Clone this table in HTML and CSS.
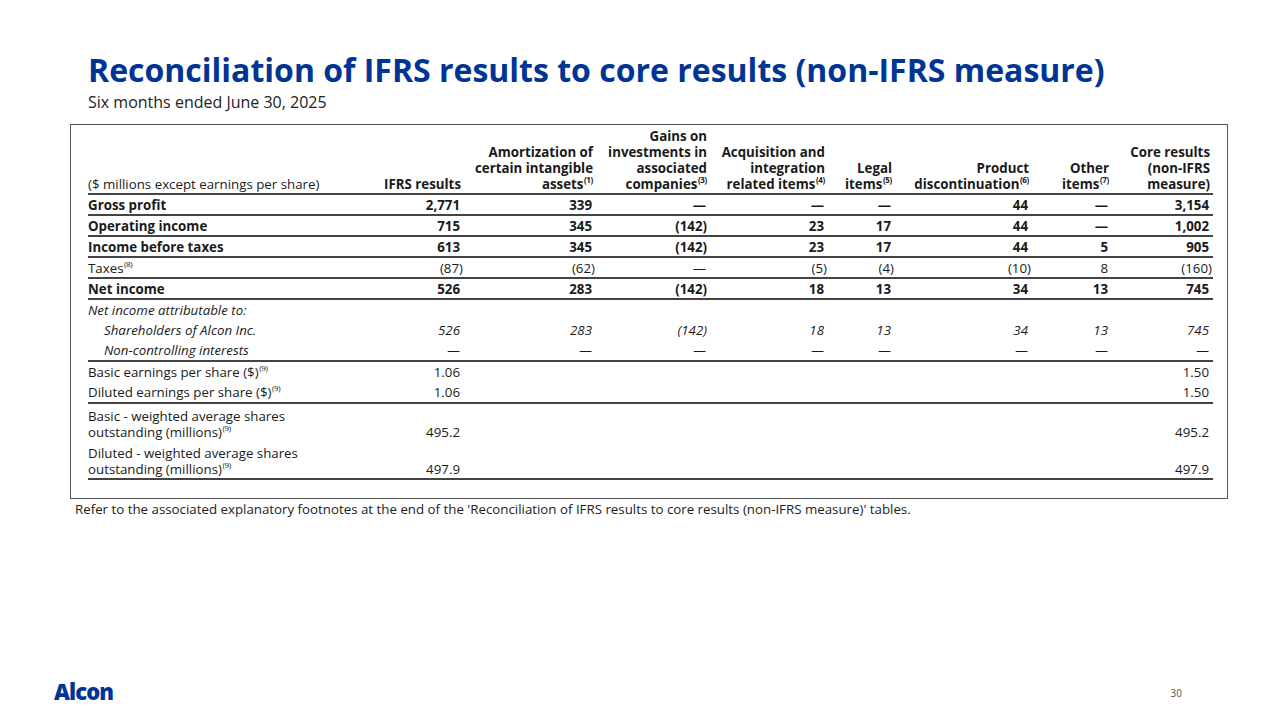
FILE: index.html
```html
<!DOCTYPE html>
<html>
<head>
<meta charset="utf-8">
<link rel="stylesheet" href="styles.css">
</head>
<body>
<div class="slide">
  <h1 class="title">Reconciliation of IFRS results to core results (non-IFRS measure)</h1>
  <div class="subtitle">Six months ended June 30, 2025</div>
  <div class="box">
    <table class="recon">
      <colgroup>
        <col class="c0"><col class="c1"><col class="c2"><col class="c3"><col class="c4"><col class="c5"><col class="c6"><col class="c7"><col class="c8">
      </colgroup>
      <thead>
        <tr>
          <th class="lbl">($ millions except earnings per share)</th>
          <th>IFRS results</th>
          <th>Amortization of certain intangible assets<sup>(1)</sup></th>
          <th>Gains on investments in associated companies<sup>(3)</sup></th>
          <th>Acquisition and integration related items<sup>(4)</sup></th>
          <th>Legal items<sup>(5)</sup></th>
          <th>Product discontinuation<sup>(6)</sup></th>
          <th>Other items<sup>(7)</sup></th>
          <th>Core results (non-IFRS measure)</th>
        </tr>
      </thead>
      <tbody>
        <tr class="b line">
          <td class="lbl">Gross profit</td><td>2,771</td><td>339</td><td>—</td><td>—</td><td>—</td><td>44</td><td>—</td><td>3,154</td>
        </tr>
        <tr class="b line">
          <td class="lbl">Operating income</td><td>715</td><td>345</td><td><span class="negb">(142)</span></td><td>23</td><td>17</td><td>44</td><td>—</td><td>1,002</td>
        </tr>
        <tr class="b line">
          <td class="lbl">Income before taxes</td><td>613</td><td>345</td><td><span class="negb">(142)</span></td><td>23</td><td>17</td><td>44</td><td>5</td><td>905</td>
        </tr>
        <tr class="line">
          <td class="lbl">Taxes<sup>(8)</sup></td><td><span class="neg">(87)</span></td><td><span class="neg">(62)</span></td><td>—</td><td><span class="neg">(5)</span></td><td><span class="neg">(4)</span></td><td><span class="neg">(10)</span></td><td>8</td><td><span class="neg">(160)</span></td>
        </tr>
        <tr class="b line">
          <td class="lbl">Net income</td><td>526</td><td>283</td><td><span class="negb">(142)</span></td><td>18</td><td>13</td><td>34</td><td>13</td><td>745</td>
        </tr>
        <tr class="i">
          <td class="lbl" colspan="9">Net income attributable to:</td>
        </tr>
        <tr class="i">
          <td class="lbl ind">Shareholders of Alcon Inc.</td><td>526</td><td>283</td><td><span class="negb">(142)</span></td><td>18</td><td>13</td><td>34</td><td>13</td><td>745</td>
        </tr>
        <tr class="i line">
          <td class="lbl ind">Non-controlling interests</td><td>—</td><td>—</td><td>—</td><td>—</td><td>—</td><td>—</td><td>—</td><td>—</td>
        </tr>
        <tr class="eps">
          <td class="lbl">Basic earnings per share ($)<sup>(9)</sup></td><td>1.06</td><td></td><td></td><td></td><td></td><td></td><td></td><td>1.50</td>
        </tr>
        <tr class="eps line">
          <td class="lbl">Diluted earnings per share ($)<sup>(9)</sup></td><td>1.06</td><td></td><td></td><td></td><td></td><td></td><td></td><td>1.50</td>
        </tr>
        <tr class="tall">
          <td class="lbl">Basic - weighted average shares<br>outstanding (millions)<sup>(9)</sup></td><td>495.2</td><td></td><td></td><td></td><td></td><td></td><td></td><td>495.2</td>
        </tr>
        <tr class="tall line">
          <td class="lbl">Diluted - weighted average shares<br>outstanding (millions)<sup>(9)</sup></td><td>497.9</td><td></td><td></td><td></td><td></td><td></td><td></td><td>497.9</td>
        </tr>
      </tbody>
    </table>
  </div>
  <div class="note">Refer to the associated explanatory footnotes at the end of the 'Reconciliation of IFRS results to core results (non-IFRS measure)' tables.</div>
  <div class="footer">
    <div class="logo">Alcon</div>
    <div class="page">30</div>
  </div>
</div>
</body>
</html>
```
FILE: styles.css
```css
html, body {
  margin: 0;
  padding: 0;
  background: #ffffff;
}
.slide {
  width: 1280px;
  height: 720px;
  box-sizing: border-box;
  position: relative;
  font-family: "Open Sans", "DejaVu Sans", sans-serif;
  color: #1a1a1a;
  padding: 50px 52px 0 70px;
  display: flex;
  flex-direction: column;
}
.title {
  margin: 0 0 0 18px;
  font-size: 32px;
  line-height: 40px;
  font-weight: 700;
  color: #003595;
}
.subtitle {
  margin: 0 0 0 18px;
  font-size: 16px;
  line-height: 24px;
  color: #222;
}
.box {
  margin-top: 10px;
  border: 1.5px solid #555;
  padding: 3px 14px 18px 17px;
  width: 1158px;
  box-sizing: border-box;
}
.recon {
  border-collapse: collapse;
  table-layout: fixed;
  width: 1125px;
  font-size: 13.3px;
  line-height: 16px;
}
.c0 { width: 294px; }
.c1 { width: 82px; }
.c2 { width: 132px; }
.c3 { width: 114px; }
.c4 { width: 118px; }
.c5 { width: 67px; }
.c6 { width: 137px; }
.c7 { width: 80px; }
.c8 { width: 101px; }
.recon th {
  font-weight: 700;
  text-align: right;
  vertical-align: bottom;
  padding: 0 3px 1px 0;
  border-bottom: 2px solid #444;
}
.recon th.lbl {
  font-weight: 400;
  text-align: left;
}
.recon td {
  text-align: right;
  padding: 0 4px 0 0;
  height: 19px;
  vertical-align: middle;
}
.recon td.lbl {
  text-align: left;
}
.recon td.ind {
  padding-left: 16px;
}
.recon tr.line td {
  border-bottom: 2px solid #444;
}
.recon tr.b td { font-weight: 700; }
.recon tr.i td { font-style: italic; height: 20px; }
.recon tr.eps td { height: 20px; }
.recon tr.tall td {
  height: 36px;
  vertical-align: bottom;
  padding-bottom: 1px;
}
.recon sup {
  font-size: 8px;
  line-height: 0;
  vertical-align: 6px;
  letter-spacing: -0.3px;
  margin-left: 0.5px;
}
.neg {
  margin-right: -3px;
}
.negb {
  margin-right: -1px;
}
.note {
  margin: 1px 0 0 5px;
  font-size: 13.3px;
  line-height: 18px;
  color: #222;
}
.footer {
  margin-top: auto;
  height: 42px;
  display: flex;
  align-items: flex-start;
  justify-content: space-between;
  margin-left: -16px;
  width: 1128px;
}
.logo {
  font-family: "Open Sans", sans-serif;
  font-weight: 800;
  font-size: 22px;
  line-height: 26px;
  color: #003595;
  letter-spacing: -0.9px;
}
.page {
  font-size: 10px;
  line-height: 14px;
  color: #555;
  margin-top: 8px;
}
```
